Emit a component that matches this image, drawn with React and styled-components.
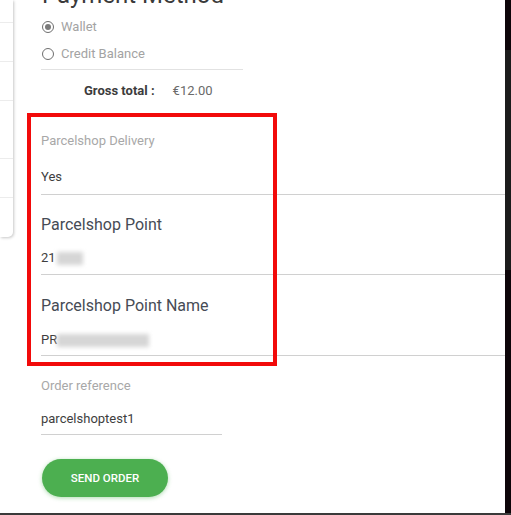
import React from "react";
import styled, { createGlobalStyle } from "styled-components";

const Global = createGlobalStyle`
  html, body { margin: 0; padding: 0; background: #fff; }
  body { font-family: Roboto, "Liberation Sans", Arial, sans-serif; }
  * { box-sizing: border-box; }
`;

const Page = styled.div`
  position: relative;
  width: 511px;
  height: 515px;
  overflow: hidden;
  display: flex;
  flex-direction: column;
  background: #fff;
`;

const Body = styled.div`
  flex: 1;
  display: flex;
  min-height: 0;
`;

const BottomBar = styled.div`
  height: 2px;
  background: #3a3a3a;
`;

const SideCard = styled.div`
  width: 13px;
  height: 237px;
  flex: none;
  display: flex;
  flex-direction: column;
  background: #fff;
  border-radius: 0 0 5px 0;
  box-shadow: 1px 1px 3px rgba(0, 0, 0, 0.22);
`;

const SideItem = styled.div`
  height: ${(p) => p.h}px;
  flex: none;
  border-bottom: ${(p) => (p.last ? "none" : "1px solid #ececec")};
`;

const Main = styled.div`
  flex: 1;
  min-width: 0;
  padding-left: 28px;
  display: flex;
  flex-direction: column;
`;

const RightStrip = styled.div`
  width: 6px;
  flex: none;
  display: flex;
  flex-direction: column;
`;

const StripPart = styled.div`
  height: ${(p) => (p.h ? `${p.h}px` : "auto")};
  flex: ${(p) => (p.h ? "none" : "1")};
  background: ${(p) => p.c};
`;

const Heading = styled.h2`
  margin: -20px 0 0 1px;
  font-size: 24px;
  line-height: 30px;
  font-weight: 400;
  color: #3a3a3a;
  white-space: nowrap;
`;

const RadioGroup = styled.div`
  width: 202px;
  margin-top: 3px;
  padding-bottom: 2px;
  border-bottom: 1px solid #e2e2e2;
  display: flex;
  flex-direction: column;
`;

const RadioRow = styled.label`
  height: 27px;
  display: flex;
  align-items: center;
  gap: 7px;
  font-size: 13px;
  color: #a3a3a3;
`;

const RadioCircle = styled.span`
  width: 12px;
  height: 12px;
  margin-left: 1px;
  border-radius: 50%;
  border: 1.5px solid #6e6e6e;
  display: flex;
  align-items: center;
  justify-content: center;
  &::after {
    content: "";
    width: 6px;
    height: 6px;
    border-radius: 50%;
    background: ${(p) => (p.checked ? "#7a7a7a" : "transparent")};
  }
`;

const TotalRow = styled.div`
  margin-top: 10px;
  height: 20px;
  padding-left: 43px;
  display: flex;
  align-items: center;
  gap: 18px;
  font-size: 13px;
`;

const TotalLabel = styled.span`
  font-weight: 700;
  color: #3c3c3c;
`;

const TotalValue = styled.span`
  color: #6a6a6a;
`;

const Field = styled.div`
  margin-top: ${(p) => p.mt}px;
  width: ${(p) => (p.w ? `${p.w}px` : "auto")};
  display: flex;
  flex-direction: column;
`;

const FieldLabel = styled.div`
  font-size: ${(p) => (p.big ? 16 : 13)}px;
  line-height: ${(p) => (p.big ? 20 : 16)}px;
  color: ${(p) => (p.big ? "#464b55" : "#a8a8a8")};
`;

const FieldValue = styled.div`
  margin-top: ${(p) => p.gap}px;
  padding-bottom: ${(p) => p.pb}px;
  border-bottom: 1px solid #d0d0d0;
  font-size: 13px;
  line-height: 16px;
  color: #3e3e3e;
  display: flex;
  align-items: center;
`;

const Blur = styled.span`
  display: inline-block;
  width: ${(p) => p.w}px;
  height: 13px;
  margin-left: ${(p) => p.ml}px;
  background: #d6d6d6;
  filter: blur(2px);
`;

const SendButton = styled.button`
  margin-top: 24px;
  margin-left: 1px;
  width: 126px;
  height: 38px;
  border: none;
  border-radius: 19px;
  background: #4caf50;
  color: #fff;
  font-family: Roboto, "Liberation Sans", Arial, sans-serif;
  font-size: 11.5px;
  font-weight: 500;
  box-shadow: 0 1px 4px rgba(76, 175, 80, 0.45);
  align-self: flex-start;
`;

const Highlight = styled.div`
  position: absolute;
  left: 27px;
  top: 113px;
  width: 250px;
  height: 253px;
  border: 4px solid #f20a0a;
  pointer-events: none;
`;

export default function App() {
  return (
    <Page>
      <Global />
      <Body>
        <SideCard>
          <SideItem h={23} />
          <SideItem h={39} />
          <SideItem h={39} />
          <SideItem h={58} />
          <SideItem h={39} />
          <SideItem h={39} last />
        </SideCard>
        <Main>
          <Heading>Payment Method</Heading>
          <RadioGroup>
            <RadioRow>
              <RadioCircle checked />
              Wallet
            </RadioRow>
            <RadioRow>
              <RadioCircle />
              Credit Balance
            </RadioRow>
          </RadioGroup>
          <TotalRow>
            <TotalLabel>Gross total :</TotalLabel>
            <TotalValue>€12.00</TotalValue>
          </TotalRow>
          <Field mt={33}>
            <FieldLabel>Parcelshop Delivery</FieldLabel>
            <FieldValue gap={20} pb={9}>Yes</FieldValue>
          </Field>
          <Field mt={20}>
            <FieldLabel big>Parcelshop Point</FieldLabel>
            <FieldValue gap={15} pb={8}>
              21
              <Blur w={26} ml={1} />
            </FieldValue>
          </Field>
          <Field mt={21}>
            <FieldLabel big>Parcelshop Point Name</FieldLabel>
            <FieldValue gap={16} pb={7}>
              PR
              <Blur w={92} ml={0} />
            </FieldValue>
          </Field>
          <Field mt={22} w={181}>
            <FieldLabel>Order reference</FieldLabel>
            <FieldValue gap={17} pb={7}>parcelshoptest1</FieldValue>
          </Field>
          <SendButton>SEND ORDER</SendButton>
        </Main>
        <RightStrip>
          <StripPart h={50} c="#0d0509" />
          <StripPart h={220} c="#1c1c1c" />
          <StripPart c="#0d0509" />
        </RightStrip>
      </Body>
      <BottomBar />
      <Highlight />
    </Page>
  );
}
